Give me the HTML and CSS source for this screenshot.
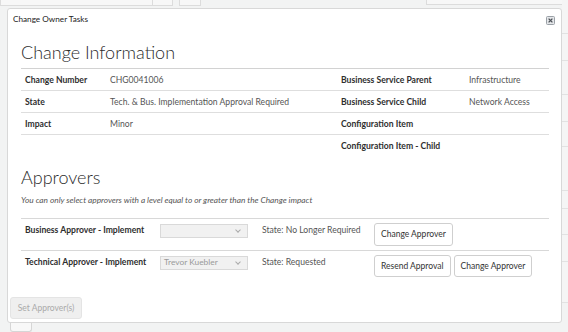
FILE: index.html
```html
<html>
	<head>
		<title>Change Owner Tasks</title>
		<meta charset="UTF-8">
		<link rel="stylesheet" href="styles.css">
	</head>
	<body>

		<!-- page behind the dialog -->
		<div class="backdrop">
			<div class="topfields">
				<span class="field field_wide"></span>
				<span class="field field_small"></span>
				<span class="field_gap"></span>
				<span class="field field_right"></span>
			</div>
			<div class="sidelist">
				<div class="siderow" style="height:33px"></div>
				<div class="siderow" style="height:26px"></div>
				<div class="siderow" style="height:33px"></div>
				<div class="siderow" style="height:26px"></div>
				<div class="siderow" style="height:24px"></div>
				<div class="siderow" style="height:43px"></div>
				<div class="siderow" style="height:17px"></div>
				<div class="siderow" style="height:25px"></div>
				<div class="siderow" style="height:26px"></div>
				<div class="siderow" style="height:40px"></div>
			</div>
			<span class="stub"></span>
		</div>

		<div class="modal">
			<div class="modal_header">
				<span class="modal_title">Change Owner Tasks</span>
				<button class="close" title="Close">
					<svg width="9" height="9" viewBox="0 0 9 9">
						<rect x="0.5" y="0.5" width="8" height="8" rx="1" fill="#e4e6e9" stroke="#9aa0a6"/>
						<path d="M2.6 2.6 L6.4 6.4 M6.4 2.6 L2.6 6.4" stroke="#4a4f55" stroke-width="1.3"/>
					</svg>
				</button>
			</div>

			<div class="modal_body">
				<h2>Change Information</h2>
				<table class="info">
					<tr>
						<td class="namecol c1">Change Number</td>
						<td class="val c2">CHG0041006</td>
						<td class="namecol c3">Business Service Parent</td>
						<td class="val">Infrastructure</td>
					</tr><tr>
						<td class="namecol">State</td>
						<td class="val">Tech. &amp; Bus. Implementation Approval Required</td>
						<td class="namecol">Business Service Child</td>
						<td class="val">Network Access</td>
					</tr><tr>
						<td class="namecol">Impact</td>
						<td class="val">Minor</td>
						<td class="namecol">Configuration Item</td>
						<td class="val"></td>
					</tr><tr>
						<td></td>
						<td></td>
						<td class="namecol">Configuration Item - Child</td>
						<td class="val"></td>
					</tr>
				</table>

				<h2 class="second">Approvers</h2>
				<p class="note">You can only select approvers with a level equal to or greater than the Change impact</p>

				<table class="approvers">
					<tr>
						<td class="namecol a1">Business Approver - Implement</td>
						<td class="a2">
							<div class="select"><span></span><i class="chev"></i></div>
						</td>
						<td class="val a3">State: No Longer Required</td>
						<td class="actions">
							<div class="btnrow">
								<button class="btn">Change Approver</button>
							</div>
						</td>
					</tr><tr class="lastrow">
						<td class="namecol">Technical Approver - Implement</td>
						<td>
							<div class="select"><span>Trevor Kuebler</span><i class="chev"></i></div>
						</td>
						<td class="val">State: Requested</td>
						<td class="actions">
							<div class="btnrow">
								<button class="btn">Resend Approval</button>
								<button class="btn">Change Approver</button>
							</div>
						</td>
					</tr>
				</table>
			</div>

			<div class="modal_footer">
				<button class="btn btn_disabled" disabled>Set Approver(s)</button>
			</div>
		</div>

	</body>
</html>
```

FILE: styles.css
```css
body {
	margin: 0px;
	padding: 0px;
	overflow: hidden;
	background-color: #f2f3f3;
	font-family: Lato, 'Noto Sans', sans-serif;
	font-size: 8.6px;
	color: #2e2e2e;
}

/* page behind the dialog */
.backdrop {
	height: 332px;
	position: relative;
}
.topfields {
	display: flex;
	height: 6px;
}
.field {
	display: block;
	height: 5px;
	border: 1px solid #dcdcdc;
	border-top: none;
	background-color: #f7f7f7;
}
.field_wide {
	width: 171px;
	background: linear-gradient(90deg, #f7f7f7 151px, #dcdcdc 151px, #dcdcdc 152px, #f7f7f7 152px);
}
.field_small {
	width: 20px;
	margin-left: 6px;
}
.field_gap {
	flex: 1;
}
.field_right {
	width: 140px;
	height: 4px;
}
.sidelist {
	position: absolute;
	right: 0px;
	top: 0px;
	width: 6px;
}
.siderow {
	border-bottom: 1px solid #e2e2e2;
	background-color: #f5f5f5;
}
.stub {
	position: absolute;
	left: 10px;
	bottom: 0px;
	width: 20px;
	height: 9px;
	border: 1px solid #d6d6d6;
	border-top: none;
	border-radius: 0 0 3px 3px;
	background-color: #f8f8f8;
}

/* dialog */
.modal {
	position: absolute;
	left: 7px;
	top: 8px;
	width: 553px;
	height: 313px;
	display: flex;
	flex-direction: column;
	background-color: #fff;
	border: 1px solid #d8d8d8;
	border-radius: 3px;
}
.modal_header {
	display: flex;
	justify-content: space-between;
	align-items: flex-start;
	height: 12px;
	padding: 4px 6px 0px 5px;
}
.modal_title {
	font-size: 8.2px;
	line-height: 12px;
	color: #222;
}
.close {
	margin: 0px;
	margin-top: 3px;
	padding: 0px;
	border: none;
	background: none;
	line-height: 0;
}
.modal_body {
	flex: 1;
	padding: 0px 12px 0px 13px;
}
h2 {
	margin: 16px 0px 5px 0px;
	font-size: 18px;
	line-height: 22px;
	font-weight: 300;
	color: #2b2b2b;
}
h2.second {
	margin-top: 9px;
	margin-bottom: 7px;
}

table {
	width: 100%;
	table-layout: fixed;
	border-collapse: collapse;
	font-size: 8.6px;
}
td {
	box-sizing: border-box;
	padding: 0px 4px;
	border-top: 1px solid #dedede;
	text-align: left;
	white-space: nowrap;
}
.info td {
	height: 22px;
}
.info tr:first-child td {
	border-top-color: #d2d2d2;
}
.namecol {
	font-weight: bold;
	color: #2e2e2e;
}
.val {
	color: #555;
}
.c1 { width: 85px; }
.c2 { width: 231px; }
.c3 { width: 128px; }

.note {
	margin: 0px 0px 13px 0px;
	font-size: 8.3px;
	line-height: 10px;
	font-style: italic;
	color: #555;
}

.approvers td {
	vertical-align: top;
	padding-top: 6px;
	padding-bottom: 4px;
	line-height: 11px;
	border-top-color: #d8d8d8;
}
.approvers .a2,
.approvers .lastrow td:nth-child(2) {
	padding-top: 5px;
}
.approvers .actions {
	padding-top: 4px;
}
.a1 { width: 135px; }
.a2 { width: 102px; }
.a3 { width: 112px; }

.select {
	box-sizing: border-box;
	display: flex;
	align-items: center;
	justify-content: space-between;
	width: 88px;
	height: 14px;
	padding: 0px 2px 0px 3px;
	border: 1px solid #d9d9d9;
	background-color: #f1f1f1;
	color: #999;
	font-size: 8.4px;
}
.chev {
	width: 3px;
	height: 3px;
	margin-right: 5px;
	margin-top: -2px;
	border-right: 1px solid #aaa;
	border-bottom: 1px solid #aaa;
	transform: rotate(45deg);
}

.btnrow {
	display: flex;
	gap: 3px;
}
.btn {
	height: 23px;
	padding: 0px 6px;
	margin: 0px;
	border: 1px solid #cfcfcf;
	border-radius: 3px;
	background-color: #fff;
	font-family: Lato, 'Noto Sans', sans-serif;
	font-size: 8.5px;
	color: #333;
}
.lastrow .btn {
	height: 22px;
}

.modal_footer {
	padding: 0px 0px 3px 2px;
}
.btn_disabled {
	height: 22px;
	width: 72px;
	padding: 0px;
	border-color: #e4e4e4;
	background-color: #efefef;
	color: #aaa;
}
```
